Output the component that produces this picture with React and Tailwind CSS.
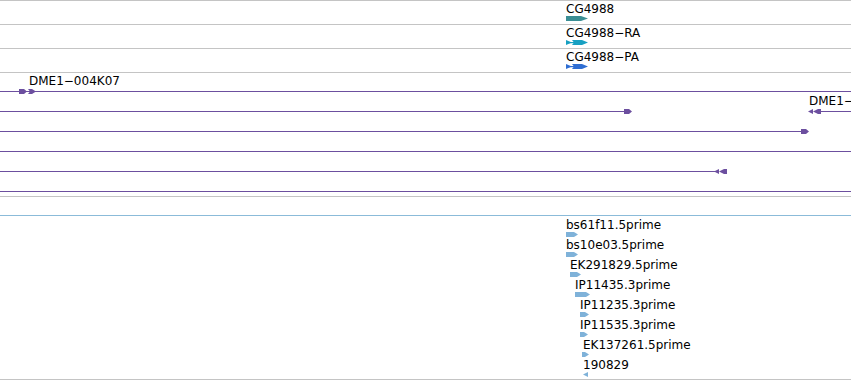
import React from "react";

const PURPLE = "#6c4f9f";
const EST = "#7fb2d9";

function GeneTrack({ label, color, kind, x }) {
  return (
    <div className="h-[24px] border-t border-[#c4c4c4] pt-[1px] flex flex-col items-start" style={{ paddingLeft: x }}>
      <div className="text-[12px] leading-[14px] whitespace-nowrap">{label}</div>
      <svg className="block -ml-px" width="26" height="6" viewBox="0 0 26 6">
        {kind === "gene" ? (
          <polygon points="1,0 16,0 23,2.5 16,5 1,5" fill={color} />
        ) : (
          <g fill={color}>
            <polygon points="1,0 7,2.5 1,5" />
            <rect x="1" y="2" width="8" height="1.2" />
            <polygon points="7,0 17,0 23,2.5 17,5 7,5 9,2.5" />
          </g>
        )}
      </svg>
    </div>
  );
}

function RightArrows({ x, double }) {
  return (
    <svg className="absolute top-[-3px]" style={{ left: x }} width="20" height="7" viewBox="0 0 20 7">
      <g fill={PURPLE}>
        <polygon points="0,1 5,1 8,3.5 5,6 0,6" />
        {double && <polygon points="9,1 13,1 17,3.5 13,6 9,6 11,3.5" />}
      </g>
    </svg>
  );
}

function LeftArrows({ x }) {
  return (
    <svg className="absolute top-[-3px]" style={{ left: x }} width="14" height="7" viewBox="0 0 14 7">
      <g fill={PURPLE}>
        <polygon points="0,3.5 5,1 5,6" />
        <polygon points="5,3.5 10,1 13,1 13,6 10,6" />
      </g>
    </svg>
  );
}

const bacRows = [
  { segs: [[0, 851]], right: [{ x: 19, double: true }], left: [], labels: [{ x: 29, t: "DME1\u2212004K07" }] },
  { segs: [[0, 626], [814, 851]], right: [{ x: 624 }], left: [{ x: 808 }], labels: [{ x: 809, t: "DME1\u2212" }] },
  { segs: [[0, 802]], right: [{ x: 801 }], left: [], labels: [] },
  { segs: [[0, 851]], right: [], left: [], labels: [] },
  { segs: [[0, 718]], right: [], left: [{ x: 714 }], labels: [] },
  { segs: [[0, 851]], right: [], left: [], labels: [] },
];

const ests = [
  { t: "bs61f11.5prime", lx: 566, gx: 566, w: 12, dir: "r" },
  { t: "bs10e03.5prime", lx: 566, gx: 566, w: 12, dir: "r" },
  { t: "EK291829.5prime", lx: 570, gx: 570, w: 11, dir: "r" },
  { t: "IP11435.3prime", lx: 575, gx: 575, w: 15, dir: "r" },
  { t: "IP11235.3prime", lx: 580, gx: 580, w: 9, dir: "r" },
  { t: "IP11535.3prime", lx: 580, gx: 580, w: 8, dir: "r" },
  { t: "EK137261.5prime", lx: 583, gx: 582, w: 7, dir: "r" },
  { t: "190829", lx: 583, gx: 583, w: 5, dir: "l" },
];

export default function App() {
  return (
    <div
      className="w-[851px] h-[380px] bg-white overflow-hidden text-black flex flex-col"
      style={{ fontFamily: '"DejaVu Sans", sans-serif' }}
    >
      <GeneTrack label="CG4988" color="#3a8e94" kind="gene" x={566} />
      <GeneTrack label={"CG4988\u2212RA"} color="#17a0c2" kind="tx" x={566} />
      <GeneTrack label={"CG4988\u2212PA"} color="#2f6ed3" kind="tx" x={566} />

      <div className="border-t border-[#c4c4c4] pt-[18px] h-[124px] flex flex-col">
        {bacRows.map((r, i) => (
          <div key={i} className="relative h-[20px] shrink-0">
            {r.segs.map(([a, b], j) => (
              <div key={j} className="absolute top-0 h-px bg-[#6c4f9f]" style={{ left: a, width: b - a }} />
            ))}
            {r.right.map((a, j) => (
              <RightArrows key={j} x={a.x} double={a.double} />
            ))}
            {r.left.map((a, j) => (
              <LeftArrows key={j} x={a.x} />
            ))}
            {r.labels.map((l, j) => (
              <div key={j} className="absolute top-[-17px] text-[12px] leading-[14px] whitespace-nowrap" style={{ left: l.x }}>
                {l.t}
              </div>
            ))}
          </div>
        ))}
      </div>

      <div className="border-t border-[#c4c4c4] h-[183px] flex flex-col">
        <div className="mt-[18px] h-px bg-[#8bbbd9]" />
        <div className="pt-[2px] flex flex-col">
          {ests.map((e, i) => (
            <div key={i} className="h-[20px] flex flex-col items-start">
              <div className="text-[12px] leading-[14px] whitespace-nowrap" style={{ marginLeft: e.lx }}>
                {e.t}
              </div>
              <svg className="block" style={{ marginLeft: e.gx }} width={e.w + 1} height="5" viewBox={`0 0 ${e.w + 1} 5`}>
                {e.dir === "r" ? (
                  <polygon points={`0,0 ${e.w - 4},0 ${e.w},2.5 ${e.w - 4},5 0,5`} fill={EST} />
                ) : (
                  <polygon points={`0,2.5 ${e.w},0 ${e.w},5`} fill={EST} />
                )}
              </svg>
            </div>
          ))}
        </div>
      </div>
      <div className="h-px bg-[#c4c4c4]" />
    </div>
  );
}
